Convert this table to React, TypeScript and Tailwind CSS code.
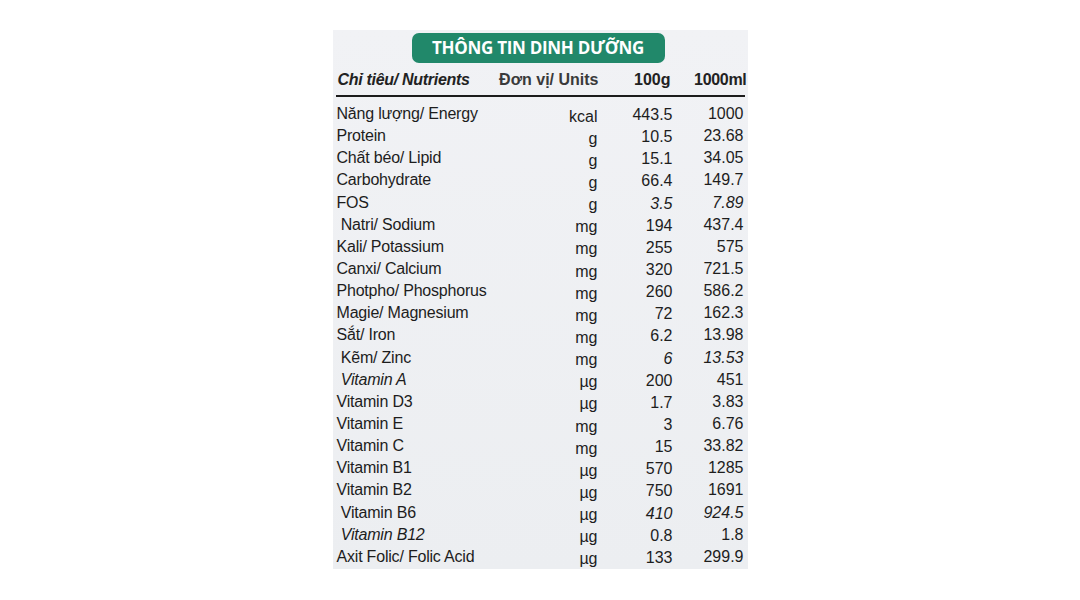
const rows: [string, string, string, string, string?][] = [
  ['Năng lượng/ Energy', 'kcal', '443.5', '1000'],
  ['Protein', 'g', '10.5', '23.68'],
  ['Chất béo/ Lipid', 'g', '15.1', '34.05'],
  ['Carbohydrate', 'g', '66.4', '149.7'],
  ['FOS', 'g', '3.5', '7.89', 'vi'],
  [' Natri/ Sodium', 'mg', '194', '437.4'],
  ['Kali/ Potassium', 'mg', '255', '575'],
  ['Canxi/ Calcium', 'mg', '320', '721.5'],
  ['Photpho/ Phosphorus', 'mg', '260', '586.2'],
  ['Magie/ Magnesium', 'mg', '72', '162.3'],
  ['Sắt/ Iron', 'mg', '6.2', '13.98'],
  [' Kẽm/ Zinc', 'mg', '6', '13.53', 'vi'],
  [' Vitamin A', 'µg', '200', '451', 'ni'],
  ['Vitamin D3', 'µg', '1.7', '3.83'],
  ['Vitamin E', 'mg', '3', '6.76'],
  ['Vitamin C', 'mg', '15', '33.82'],
  ['Vitamin B1', 'µg', '570', '1285'],
  ['Vitamin B2', 'µg', '750', '1691'],
  [' Vitamin B6', 'µg', '410', '924.5', 'vi'],
  [' Vitamin B12', 'µg', '0.8', '1.8', 'ni'],
  ['Axit Folic/ Folic Acid', 'µg', '133', '299.9'],
]

export default function App() {
  return (
    <div className="w-[1080px] h-[600px] bg-white pt-[30px]" style={{ fontFamily: '"Liberation Sans", Arial, sans-serif' }}>
      <div className="mx-auto w-[415px] h-[539px] bg-gradient-to-b from-[#f1f2f5] to-[#eceef1] flex flex-col">
        <div className="flex justify-center pr-[4px] pt-[3px]">
          <div className="w-[253px] h-[30px] rounded-[7px] bg-[#21886a] flex items-center justify-center">
            <span className="text-white font-bold text-[17px] tracking-[-0.3px]" style={{ fontFamily: '"Open Sans", sans-serif' }}>
              THÔNG TIN DINH DƯỠNG
            </span>
          </div>
        </div>
        <div className="grid grid-cols-[160px_105px_76px_70px] pl-[5px] mt-[4px] h-[26px] items-center text-[16px] font-bold text-[#222]">
          <span className="italic tracking-[-0.3px]">Chỉ tiêu/ Nutrients</span>
          <span className="text-right text-[#3a3a3a] pr-[4px]">Đơn vị/ Units</span>
          <span className="text-right pr-[8px]">100g</span>
          <span className="text-right pr-[2px] tracking-[-0.3px]">1000ml</span>
        </div>
        <div className="mx-[3px] mt-[2px] h-[2px] bg-[#1c1c1c]" />
        <div className="flex flex-col mt-[6px]">
          {rows.map(([name, unit, a, b, flag]) => (
            <div key={name} className="grid grid-cols-[186px_75px_80px_70px] pl-[4px] h-[22.15px] items-center text-[16px] text-[#1d1d1d] leading-none">
              <span className={`whitespace-pre tracking-[-0.2px] ${flag === 'ni' ? 'italic' : ''}`}>{name}</span>
              <span className="text-right pt-[5px]">{unit}</span>
              <span className={`text-right pt-[2px] pr-[5px] ${flag === 'vi' ? 'italic' : ''}`}>{a}</span>
              <span className={`text-right pr-[4px] ${flag === 'vi' ? 'italic' : ''}`}>{b}</span>
            </div>
          ))}
        </div>
      </div>
    </div>
  )
}
